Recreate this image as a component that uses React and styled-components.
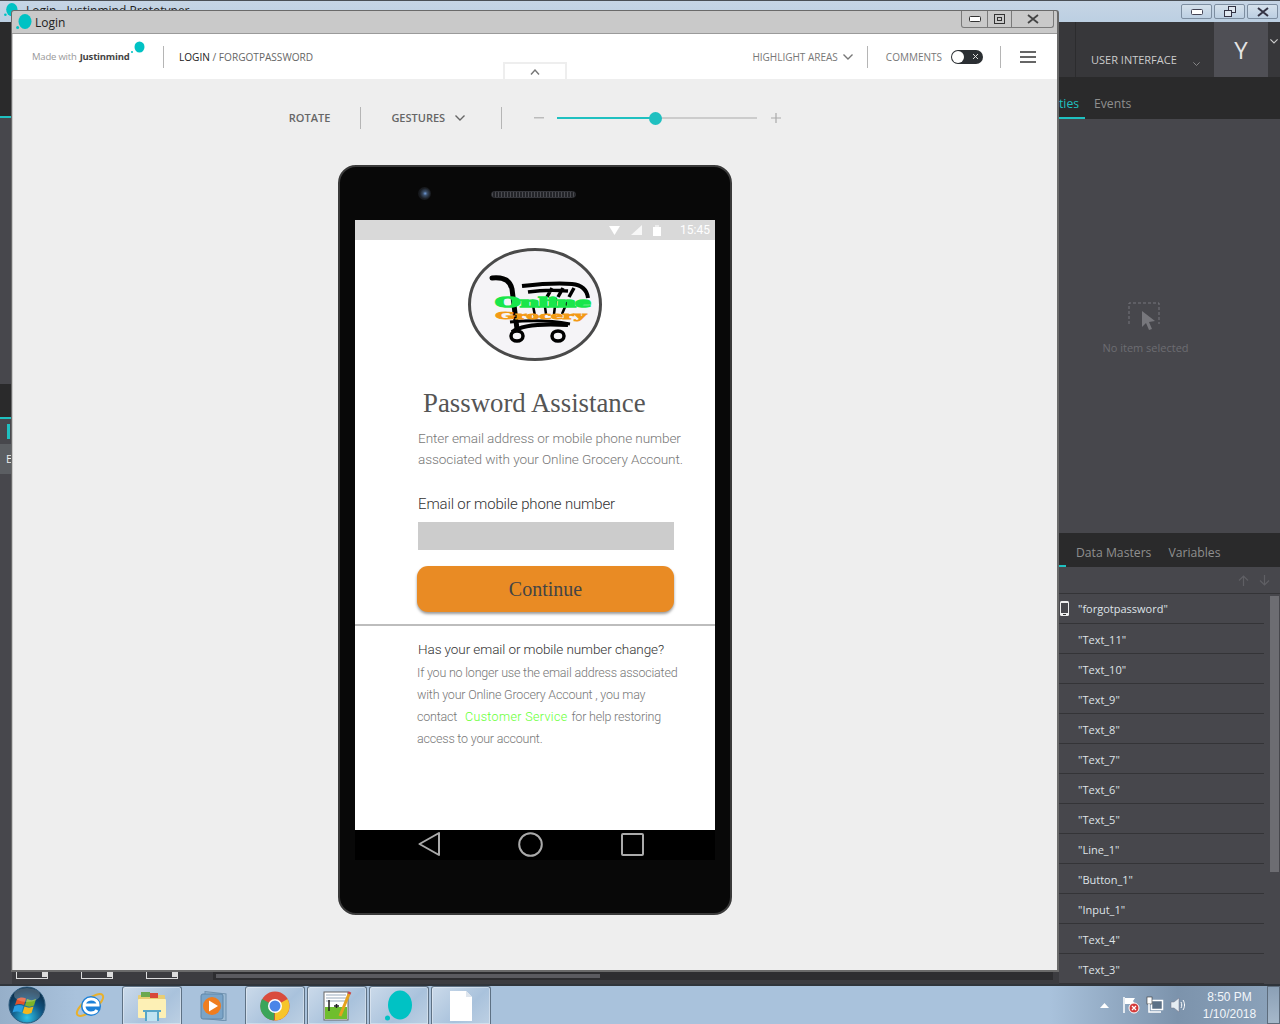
import styled, { createGlobalStyle } from 'styled-components';

const GlobalStyle = createGlobalStyle`
  html, body { margin: 0; padding: 0; background: #47474c; }
  * { box-sizing: border-box; }
`;

const Desktop = styled.div`
  position: relative;
  width: 1280px;
  height: 1024px;
  overflow: hidden;
  display: flex;
  flex-direction: column;
  font-family: 'Open Sans', 'Liberation Sans', sans-serif;
`;

/* ---------- app behind the preview window ---------- */

const AppTitleBar = styled.div`
  height: 22px;
  flex: none;
  border-top: 1px solid #4a4f55;
  background: linear-gradient(#c6d5e5, #bccfe2);
  display: flex;
  justify-content: space-between;
  padding-left: 4px;
`;

const AppTitle = styled.div`
  display: flex;
  align-items: center;
  gap: 8px;
  height: 18px;
  font-size: 12px;
  color: #222;
`;

const AppControls = styled.div`
  display: flex;
  gap: 2px;
  padding: 3px 2px 0 0;
`;

const AppControl = styled.div`
  width: 31px;
  height: 15px;
  border: 1px solid #7d8ea1;
  border-radius: 2px;
  background: linear-gradient(#d5e1ec, #bccfe2);
  display: flex;
  align-items: center;
  justify-content: center;
`;

const AppBody = styled.div`
  flex: 1;
  display: flex;
  min-height: 0;
`;

const LeftStrip = styled.div`
  width: 12px;
  flex: none;
  display: flex;
  flex-direction: column;
  background: #47474c;
`;

const StripBlock = styled.div`
  height: ${p => p.$h}px;
  flex: none;
  background: ${p => p.$bg || 'transparent'};
  border-bottom: ${p => (p.$teal ? '2px solid #1fc0c0' : 'none')};
  color: #eee;
  font-size: 11px;
  line-height: 30px;
  padding-left: 6px;
`;

const StripMark = styled.div`
  height: 15px;
  width: 3px;
  margin: 5px 0 5px 7px;
  background: #1fc0c0;
`;

const CenterColumn = styled.div`
  flex: 1;
  display: flex;
  flex-direction: column;
  justify-content: flex-end;
`;

const BottomStrip = styled.div`
  height: 12px;
  background: #3c3c40;
  display: flex;
  align-items: flex-start;
  padding-left: 4px;
  gap: 33px;
`;

const TinySelect = styled.div`
  width: 32px;
  height: 7px;
  border: 1px solid #ddd;
  border-top: none;
  position: relative;
  &::after {
    content: '';
    position: absolute;
    right: 0;
    top: -1px;
    width: 5px;
    height: 6px;
    background: #ddd;
  }
`;

const ScrollTrack = styled.div`
  margin-left: 2px;
  width: 840px;
  height: 8px;
  background: #2d2d30;
  padding: 2px 0 0 3px;
  &::after {
    content: '';
    display: block;
    width: 384px;
    height: 4px;
    background: #5b5b60;
  }
`;

const RightPanel = styled.div`
  width: 221px;
  flex: none;
  display: flex;
  flex-direction: column;
  background: #47474c;
`;

const PanelHeader = styled.div`
  height: 55px;
  flex: none;
  background: #37373a;
  display: flex;
  color: #ccc;
`;

const ModeLabel = styled.div`
  width: 139px;
  flex: none;
  display: flex;
  align-items: flex-end;
  gap: 16px;
  padding: 0 0 10px 15px;
  font-size: 11px;
  border-left: 1px solid #2c2c2e;
  margin-left: 16px;
  white-space: nowrap;
  svg { margin-bottom: 1px; }
`;

const Avatar = styled.div`
  width: 54px;
  flex: none;
  background: #4f4f55;
  color: #e4e4e4;
  font-size: 24px;
  display: flex;
  align-items: center;
  justify-content: center;
`;

const AvatarCaret = styled.div`
  flex: 1;
  padding: 5px 0 0 2px;
`;

const TabBar = styled.div`
  height: ${p => p.$h}px;
  flex: none;
  background: #2a2a2b;
  display: flex;
  align-items: center;
  gap: ${p => p.$gap}px;
  padding-left: ${p => p.$pad}px;
  padding-top: ${p => p.$top}px;
  font-size: 12.2px;
  color: #8f8f8f;
  position: relative;
`;

const ActiveLine = styled.div`
  position: absolute;
  left: 0;
  bottom: 0;
  height: 2px;
  width: ${p => p.$w}px;
  background: #1fc0c0;
`;

const TealTab = styled.span`
  color: #1fc0c0;
  width: 26px;
`;

const EmptyState = styled.div`
  height: 414px;
  flex: none;
  display: flex;
  flex-direction: column;
  align-items: center;
  padding: 183px 48px 0 0;
  gap: 8px;
  font-size: 11px;
  color: #6d6d72;
  svg { margin-right: 3px; }
`;

const SortBar = styled.div`
  height: 27px;
  flex: none;
  display: flex;
  justify-content: flex-end;
  align-items: center;
  gap: 10px;
  padding-right: 10px;
  border-bottom: 1px solid #343437;
`;

const ListArea = styled.div`
  flex: 1;
  display: flex;
  min-height: 0;
`;

const ItemList = styled.div`
  flex: 1;
  overflow: hidden;
`;

const ItemRow = styled.div`
  height: 30px;
  display: flex;
  align-items: center;
  position: relative;
  padding: ${p => (p.$first ? 0 : 2)}px 0 0 19px;
  font-size: 11px;
  color: #dfe3e8;
  border-bottom: 1px solid #343437;
  margin-right: 5px;
  white-space: nowrap;
`;

const RowIcon = styled.svg`
  position: absolute;
  left: 1px;
  top: 7px;
`;

const ListScrollbar = styled.div`
  width: 11px;
  flex: none;
  padding: 2px 1px 0 1px;
  &::after {
    content: '';
    display: block;
    height: 276px;
    background: #6d6d72;
  }
`;

/* ---------- preview window ---------- */

const PreviewWindow = styled.div`
  position: absolute;
  left: 11px;
  top: 10px;
  width: 1048px;
  height: 962px;
  border: 1px solid #6a6a6a;
  border-right-width: 2px;
  border-bottom-width: 2px;
  border-radius: 3px 3px 0 0;
  background: #c9c9c9;
  display: flex;
  flex-direction: column;
`;

const WindowTitle = styled.div`
  height: 23px;
  flex: none;
  display: flex;
  align-items: center;
  justify-content: space-between;
  padding-left: 4px;
  font-size: 12px;
  color: #222;
  border-bottom: 1px solid #9a9a9a;
`;

const TitleLeft = styled.div`
  display: flex;
  align-items: center;
  gap: 3px;
`;

const WindowControls = styled.div`
  display: flex;
  align-self: flex-start;
  height: 17px;
  margin-right: 3px;
  border: 1px solid #7a7a7a;
  border-top: none;
  border-radius: 0 0 3px 3px;
`;

const WindowButton = styled.div`
  width: ${p => p.$w}px;
  display: flex;
  align-items: center;
  justify-content: center;
  border-left: ${p => (p.$first ? 'none' : '1px solid #7a7a7a')};
`;

const WindowFrame = styled.div`
  flex: 1;
  display: flex;
  flex-direction: column;
  margin-left: 1px;
  min-height: 0;
  background: #eeeeee;
`;

const TopBar = styled.header`
  height: 45px;
  flex: none;
  background: #fff;
  display: flex;
  align-items: center;
  justify-content: space-between;
  padding: 0 21px 0 19px;
  position: relative;
`;

const BarGroup = styled.div`
  display: flex;
  align-items: center;
`;

const Brand = styled.div`
  display: flex;
  align-items: center;
  font-size: 9.5px;
  color: #999;
  width: 131px;
  position: relative;
  letter-spacing: -0.2px;
  b { color: #444; margin-left: 3px; font-weight: 700; }
`;

const BrandDot = styled.svg`
  position: absolute;
  left: 99px;
  top: -9px;
`;

const Rule = styled.div`
  width: 1px;
  height: ${p => p.$h || 22}px;
  background: #b5b5b5;
  margin: 0 ${p => p.$gap || 0}px;
`;

const Crumb = styled.div`
  font-size: 10.1px;
  color: #666;
  margin-left: 15px;
  b { color: #222; font-weight: 400; }
`;

const BarLabel = styled.span`
  font-size: 10px;
  color: #777;
  white-space: nowrap;
`;

const Spacer = styled.span`
  width: ${p => p.$w}px;
  flex: none;
`;

const Toggle = styled.div`
  width: 32px;
  height: 14px;
  border-radius: 7px;
  background: #2b2f33;
  margin-left: 9px;
  padding: 1px 3px 1px 1px;
  display: flex;
  align-items: center;
  justify-content: space-between;
  &::before {
    content: '';
    width: 12px;
    height: 12px;
    border-radius: 50%;
    background: #fff;
  }
`;

const Burger = styled.div`
  width: 16px;
  height: 12px;
  border-top: 2px solid #666;
  border-bottom: 2px solid #666;
  position: relative;
  &::after {
    content: '';
    position: absolute;
    left: 0;
    right: 0;
    top: 3px;
    height: 2px;
    background: #666;
  }
`;

const CollapseTab = styled.div`
  position: absolute;
  left: 490px;
  bottom: 0;
  width: 64px;
  height: 17px;
  border: 2px solid #eee;
  border-bottom: none;
  display: flex;
  align-items: center;
  justify-content: center;
`;

const Canvas = styled.main`
  flex: 1;
  display: flex;
  flex-direction: column;
  align-items: center;
  padding-top: 28px;
`;

const Controls = styled.div`
  display: flex;
  align-items: center;
  height: 22px;
`;

const ControlText = styled.span`
  font-size: 11px;
  line-height: 13px;
  margin-bottom: 2px;
  color: #666;
  font-weight: 600;
`;

const MinusMark = styled.svg`
  margin-left: -4px;
`;

const Slider = styled.div`
  width: 200px;
  height: 2px;
  background: #ccc;
  margin: 0 14px 0 13px;
  position: relative;
`;

const SliderFill = styled.div`
  height: 2px;
  background: #1fc0c0;
`;

const SliderKnob = styled.div`
  position: absolute;
  top: -5px;
  width: 13px;
  height: 13px;
  border-radius: 50%;
  background: #1fc0c0;
`;

/* ---------- phone ---------- */

const Phone = styled.div`
  margin-top: 36px;
  width: 394px;
  height: 750px;
  background: #080808;
  border: 2px solid #3a3a3a;
  border-radius: 18px;
  display: flex;
  flex-direction: column;
  align-items: center;
`;

const PhoneTop = styled.div`
  height: 53px;
  width: 100%;
  flex: none;
  position: relative;
  display: flex;
  align-items: center;
  justify-content: center;
  padding: 1px 3px 0 0;
`;

const Camera = styled.div`
  position: absolute;
  left: 78px;
  top: 20px;
  width: 13px;
  height: 13px;
  border-radius: 50%;
  background: radial-gradient(circle at 55% 50%, #6f9ad6 0, #3a4d66 22%, #1a1d22 55%, #0d0d0f 100%);
`;

const Speaker = styled.div`
  width: 85px;
  height: 7px;
  border-radius: 4px;
  border: 1px solid #34353a;
  background: repeating-linear-gradient(90deg, #4a4b50 0 1px, #222327 1px 3px);
`;

const Screen = styled.div`
  width: 360px;
  height: 640px;
  flex: none;
  display: flex;
  flex-direction: column;
  background: #fff;
`;

const StatusBar = styled.div`
  height: 20px;
  flex: none;
  background: #d9d9d9;
  display: flex;
  align-items: center;
  justify-content: flex-end;
  gap: 11px;
  padding-right: 5px;
  color: #fff;
  font-family: 'Roboto', sans-serif;
  font-size: 12px;
`;

const StatusTime = styled.span`
  margin-left: 8px;
`;

const Page = styled.div`
  flex: 1;
  display: flex;
  flex-direction: column;
  padding-top: 8px;
  font-family: 'Roboto', 'Liberation Sans', sans-serif;
  font-weight: 300;
`;

const LogoHolder = styled.div`
  display: flex;
  justify-content: center;
  height: 113px;
`;

const Heading = styled.h1`
  margin: 27px 0 0 68px;
  font-family: 'Liberation Serif', serif;
  font-size: 26.8px;
  line-height: 30px;
  font-weight: 400;
  color: #555;
`;

const Intro = styled.p`
  margin: 10px 0 0 63px;
  font-size: 13.6px;
  letter-spacing: -0.1px;
  line-height: 21px;
  color: #777;
  white-space: nowrap;
`;

const FieldLabel = styled.label`
  display: block;
  margin: 24px 0 0 63px;
  font-size: 15px;
  letter-spacing: -0.15px;
  line-height: 20px;
  color: #333;
`;

const Field = styled.div`
  width: 256px;
  height: 28px;
  margin: 8px 0 0 63px;
  background: #ccc;
`;

const ContinueButton = styled.div`
  width: 257px;
  height: 46px;
  margin: 16px 0 0 62px;
  border-radius: 11px;
  background: #e98b24;
  box-shadow: 0 2px 3px rgba(0, 0, 0, 0.4);
  display: flex;
  align-items: center;
  justify-content: center;
  font-family: 'Liberation Serif', serif;
  font-size: 20px;
  font-weight: 400;
  color: #444;
`;

const Separator = styled.div`
  height: 2px;
  margin-top: 12px;
  background: #bdbdbd;
`;

const HelpTitle = styled.div`
  margin: 14px 0 0 63px;
  font-size: 13.5px;
  letter-spacing: -0.08px;
  line-height: 18px;
  color: #333;
`;

const HelpText = styled.p`
  margin: 4px 0 0 62px;
  font-size: 12.5px;
  line-height: 22px;
  color: #777;
  white-space: nowrap;
  letter-spacing: -0.2px;
`;

const Link = styled.span`
  color: #66ff33;
  letter-spacing: 0.35px;
  margin: 0 1px 0 5px;
`;

const NavBar = styled.div`
  height: 30px;
  flex: none;
  background: #000;
  display: flex;
  align-items: center;
  padding: 0 0 2px 63px;
  gap: 78px;
`;

/* ---------- taskbar ---------- */

const Taskbar = styled.footer`
  height: 40px;
  flex: none;
  background: linear-gradient(90deg, #96afc9 0, #a9c2dc 6%, #a9c2dc 82%, #7c93ac 92%, #8ca3bb 100%);
  border-top: 2px solid #30353b;
  display: flex;
  align-items: stretch;
  padding-left: 8px;
`;

const StartOrb = styled.div`
  width: 38px;
  flex: none;
  display: flex;
  align-items: center;
  margin-right: 19px;
`;

const QuickIcon = styled.div`
  width: ${p => p.$w}px;
  margin-right: ${p => p.$after}px;
  flex: none;
  display: flex;
  align-items: center;
  justify-content: center;
`;

const TaskButton = styled.div`
  width: 60px;
  flex: none;
  margin-right: 2px;
  border: 1px solid #5e7184;
  border-bottom: none;
  border-radius: 3px 3px 0 0;
  background: linear-gradient(135deg, #cbdaea, #a9c2dc 60%, #bdd0e3);
  box-shadow: inset 0 0 0 1px rgba(255, 255, 255, 0.35);
  display: flex;
  align-items: center;
  justify-content: center;
`;

const Tray = styled.div`
  margin-left: auto;
  display: flex;
  align-items: center;
  color: #fff;
`;

const TrayIcons = styled.div`
  display: flex;
  align-items: center;
  gap: 6px;
  margin-right: 4px;
`;

const TrayArrow = styled.svg`
  margin-right: 7px;
`;

const Clock = styled.div`
  width: 76px;
  padding: 2px 0 0 1px;
  text-align: center;
  font-family: 'Liberation Sans', sans-serif;
  font-size: 12px;
  line-height: 17px;
  color: #f2f6fa;
`;

const ShowDesktop = styled.div`
  width: 13px;
  align-self: stretch;
  border: 1px solid #5d6c7c;
  background: linear-gradient(#8ba0b6, #a6b8ca);
`;

const Chevron = ({ size = 10, color = '#777', up = false, width = 1.4 }) => (
  <svg width={size} height={size * 0.6} viewBox="0 0 10 6" fill="none">
    <path d={up ? 'M1 5.5L5 1l4 4.5' : 'M.5.5L5 5 9.5.5'} stroke={color} strokeWidth={width} />
  </svg>
);

const JimDrop = ({ size = 16, small = false }) => (
  <svg width={size} height={size} viewBox="0 0 16 16">
    <ellipse cx="9" cy="7.5" rx="6.5" ry="7.5" fill="#00c2c4" />
    {small && <circle cx="1.6" cy="13.4" r="1.5" fill="#00c2c4" />}
  </svg>
);

const Logo = () => (
  <svg width="134" height="113" viewBox="0 0 134 113">
    <ellipse cx="67" cy="56.500" rx="65.500" ry="55" fill="#f5f4f7" stroke="#4a4a4a" strokeWidth="3" />
    <g fill="none" stroke="#000">
      <path d="M24 30c10-1 18 1 20 11l5 40" strokeWidth="5" strokeLinecap="round" />
      <path d="M42 74c20-2 44-1 60 2" strokeWidth="3" />
      <path d="M44 84c8-6 24-9 56-7" strokeWidth="4" />
      <ellipse cx="49" cy="88" rx="6" ry="5" strokeWidth="3.500" />
      <ellipse cx="90" cy="88" rx="6" ry="5" strokeWidth="3.500" />
      <path d="M54 38c18-2 38-3 50-2 10 1 15 6 16 14" strokeWidth="4" />
      <path d="M60 44c14-2 28-2 40-1M84 40l-5 9M95 40l-5 9M106 40l-5 9" strokeWidth="3.500" />
      <path d="M64 52l3 16M76 52l2 14M88 50l-2 16M100 52l-6 14" strokeWidth="2.500" />
    </g>
    <text x="27" y="59" fontFamily="'Liberation Serif', serif" fontWeight="700" fontSize="14" fill="#19e64b" stroke="#19e64b" strokeWidth="1.500" textLength="95" lengthAdjust="spacingAndGlyphs">Online</text>
    <text x="27" y="71" fontFamily="'Liberation Serif', serif" fontWeight="700" fontSize="11" fill="#f39a16" stroke="#f39a16" strokeWidth=".8" textLength="92" lengthAdjust="spacingAndGlyphs">Grocery</text>
  </svg>
);

const ROWS = ['Text_11', 'Text_10', 'Text_9', 'Text_8', 'Text_7', 'Text_6', 'Text_5', 'Line_1', 'Button_1', 'Input_1', 'Text_4', 'Text_3'];

const App = () => (
  <>
    <GlobalStyle />
    <Desktop>
      <AppTitleBar>
        <AppTitle>
          <JimDrop size={14} small />
          <span>Login - Justinmind Prototyper</span>
        </AppTitle>
        <AppControls>
          <AppControl>
            <svg width="12" height="6"><rect x=".5" y=".5" width="11" height="5" rx="1" fill="#fff" stroke="#445" /></svg>
          </AppControl>
          <AppControl>
            <svg width="12" height="11" fill="#dfe7ef" stroke="#334"><rect x="4.500" y=".5" width="7" height="6" /><rect x=".5" y="4.500" width="7" height="6" /></svg>
          </AppControl>
          <AppControl>
            <svg width="12" height="10" stroke="#334" strokeWidth="2"><path d="M1 1l10 8M11 1L1 9" /></svg>
          </AppControl>
        </AppControls>
      </AppTitleBar>

      <AppBody>
        <LeftStrip>
          <StripBlock $h={96} $bg="#2a2a2b" $teal />
          <StripBlock $h={266} />
          <StripBlock $h={35} $bg="#2a2a2b" $teal />
          <StripMark />
          <StripBlock $h={30} $bg="#5b5e62">E</StripBlock>
        </LeftStrip>

        <CenterColumn>
          <BottomStrip>
            <TinySelect />
            <TinySelect />
            <TinySelect />
            <ScrollTrack />
          </BottomStrip>
        </CenterColumn>

        <RightPanel>
          <PanelHeader>
            <ModeLabel>
              USER INTERFACE
              <Chevron size={7} color="#aaa" width={1} />
            </ModeLabel>
            <Avatar>Y</Avatar>
            <AvatarCaret><Chevron size={8} color="#ccc" /></AvatarCaret>
          </PanelHeader>
          <TabBar $h={42} $pad={0} $gap={9} $top={10}>
            <TealTab>ties</TealTab>
            <span>Events</span>
            <ActiveLine $w={26} />
          </TabBar>
          <EmptyState>
            <svg width="34" height="30" viewBox="0 0 34 30" fill="none">
              <path d="M2 22V1h30v21" stroke="#77777c" strokeDasharray="3 2" />
              <path d="M15 9l13 10-6 1 3 7-3 1-3-7-4 4z" fill="#77777c" />
            </svg>
            No item selected
          </EmptyState>
          <TabBar $h={34} $pad={17} $gap={17} $top={4}>
            <span>Data Masters</span>
            <span>Variables</span>
            <ActiveLine $w={7} />
          </TabBar>
          <SortBar>
            <svg width="11" height="11" viewBox="0 0 11 11" fill="none" stroke="#5f5f64" strokeWidth="1.200"><path d="M5.500 11V1M1 5.500L5.500 1 10 5.500" /></svg>
            <svg width="11" height="11" viewBox="0 0 11 11" fill="none" stroke="#5f5f64" strokeWidth="1.200"><path d="M5.500 0v10M1 5.500L5.500 10 10 5.500" /></svg>
          </SortBar>
          <ListArea>
            <ItemList>
              <ItemRow $first>
                <RowIcon width="9" height="15" viewBox="0 0 9 15">
                  <rect width="9" height="15" rx="1.500" fill="#eee" />
                  <rect x="1" y="2" width="7" height="10" fill="#47474c" />
                  <rect x="3" y="13" width="3" height="1" fill="#333" />
                </RowIcon>
                "forgotpassword"
              </ItemRow>
              {ROWS.map(name => (
                <ItemRow key={name}>"{name}"</ItemRow>
              ))}
            </ItemList>
            <ListScrollbar />
          </ListArea>
        </RightPanel>
      </AppBody>

      <Taskbar>
        <StartOrb>
          <svg width="38" height="38" viewBox="0 0 38 38">
            <defs>
              <radialGradient id="orb" cx="50%" cy="85%" r="75%">
                <stop offset="0" stopColor="#2fc4e8" />
                <stop offset=".6" stopColor="#10527f" />
                <stop offset="1" stopColor="#0c2f4b" />
              </radialGradient>
            </defs>
            <circle cx="19" cy="19" r="18" fill="url(#orb)" stroke="#2b5a7c" />
            <path d="M9 13c3-2 6-2 9-.5l-2 6.500c-3-1.500-6-1.500-9 0z" fill="#e2522c" />
            <path d="M19 13c3 1.500 6 1.500 9 0l-2 6.500c-3 1.500-6 1.500-9 0z" fill="#7eb42a" />
            <path d="M6.500 20c3-1.500 6-1.500 9 0l-2 6.500c-3-1.500-6-1.500-9 0z" fill="#2a9ee2" />
            <path d="M16.500 20.500c3 1.500 6 1.500 9 0l-2 6.500c-3 1.500-6 1.500-9 0z" fill="#f3b71e" />
            <ellipse cx="19" cy="9" rx="13" ry="7" fill="#fff" opacity=".22" />
          </svg>
        </StartOrb>
        <QuickIcon $w={50} $after={7}>
          <svg width="34" height="34" viewBox="0 0 34 34" fill="none">
            <ellipse cx="17" cy="17" rx="16" ry="6" transform="rotate(-38 17 17)" stroke="#e9b02b" strokeWidth="2" />
            <circle cx="18" cy="18" r="10" fill="#1c80d8" />
            <path d="M11 17h14c0-4-3-6-7-6s-7 3-7 7 3 7 7 7c3 0 5-1 6-3" stroke="#fff" strokeWidth="3" />
          </svg>
        </QuickIcon>
        <TaskButton>
          <svg width="32" height="32" viewBox="0 0 32 32">
            <rect x="2" y="5" width="27" height="22" rx="1" fill="#e8cd74" />
            <rect x="5" y="2" width="9" height="5" fill="#6aa84f" />
            <rect x="14" y="3" width="8" height="5" fill="#d8483a" />
            <rect x="2" y="9" width="28" height="19" rx="1" fill="#fdf0b5" />
            <path d="M10 31v-10h12v10M7 21h18" fill="#bfe3f2" stroke="#57a6c8" strokeWidth="2" />
          </svg>
        </TaskButton>
        <QuickIcon $w={61} $after={0}>
          <svg width="32" height="32" viewBox="0 0 32 32">
            <rect x="6" y="2" width="21" height="27" fill="#9dbbd4" stroke="#6f90ad" transform="skewY(6)" />
            <rect x="2" y="5" width="22" height="25" rx="2" fill="#7aa4c8" stroke="#5f86a8" />
            <circle cx="13" cy="17" r="9" fill="#ef7d1f" />
            <path d="M10 11.500l9 5.500-9 5.500z" fill="#fff" />
          </svg>
        </QuickIcon>
        <TaskButton>
          <svg width="30" height="30" viewBox="0 0 30 30">
            <circle cx="15" cy="15" r="14.500" fill="#d94c3d" />
            <path d="M15 15L27.600 8A14.500 14.500 0 0 1 15 29.500z" fill="#f6c52c" />
            <path d="M15 15l-1 14.500A14.500 14.500 0 0 1 2 8z" fill="#3ba55a" />
            <circle cx="15" cy="15" r="7" fill="#fff" />
            <circle cx="15" cy="15" r="5.500" fill="#4a85e8" />
          </svg>
        </TaskButton>
        <TaskButton>
          <svg width="30" height="32" viewBox="0 0 30 32">
            <rect x="2" y="2" width="24" height="28" fill="#fff" stroke="#666" />
            <rect x="3" y="17" width="22" height="12" fill="#6fbe2e" />
            <path d="M4 5h20M4 8h20M4 11h20" stroke="#9ab" />
            <path d="M7 10v11M12 16h5M14.500 14v4" stroke="#222" strokeWidth="1.500" />
            <path d="M27 4L18 26" stroke="#e6a21f" strokeWidth="3" />
            <path d="M27 4l1-2" stroke="#c44" strokeWidth="3" />
          </svg>
        </TaskButton>
        <TaskButton>
          <svg width="30" height="32" viewBox="0 0 30 32">
            <ellipse cx="16" cy="15" rx="12" ry="14.500" fill="#00c2c4" />
            <circle cx="3.500" cy="28" r="2.500" fill="#00c2c4" />
          </svg>
        </TaskButton>
        <TaskButton>
          <svg width="24" height="32" viewBox="0 0 24 32">
            <path d="M1 1h16l6 6v24H1z" fill="#fff" />
            <path d="M17 1l6 6h-6z" fill="#dfe6ee" />
          </svg>
        </TaskButton>
        <Tray>
          <TrayIcons>
            <TrayArrow width="9" height="5"><path d="M0 5l4.500-5L9 5z" fill="#fff" /></TrayArrow>
            <svg width="18" height="18" viewBox="0 0 18 18">
              <path d="M2 1v16" stroke="#fff" strokeWidth="1.500" />
              <path d="M3 2h10l-2 3 2 3H3z" fill="#fff" />
              <circle cx="12" cy="12" r="5" fill="#d43a3a" stroke="#fff" />
              <path d="M10 10l4 4M14 10l-4 4" stroke="#fff" strokeWidth="1.200" />
            </svg>
            <svg width="18" height="18" viewBox="0 0 18 18" fill="none" stroke="#fff">
              <rect x="5.500" y="4.500" width="11" height="9" fill="#5d7186" strokeWidth="1.500" />
              <rect x="1" y="1" width="5" height="7" fill="#fff" stroke="#333" strokeWidth=".6" />
              <path d="M3 8v8h12M8 16h6" strokeWidth="1.500" />
            </svg>
            <svg width="17" height="16" viewBox="0 0 17 16" fill="none">
              <path d="M1 5h3l5-4v14l-5-4H1z" fill="#e6edf3" stroke="#778" strokeWidth=".5" />
              <path d="M11 5c1 2 1 4 0 6M13 3c2 3 2 7 0 10" stroke="#fff" />
            </svg>
          </TrayIcons>
          <Clock>
            8:50 PM
            <br />
            1/10/2018
          </Clock>
          <ShowDesktop />
        </Tray>
      </Taskbar>

      <PreviewWindow>
        <WindowTitle>
          <TitleLeft>
            <JimDrop size={16} small />
            Login
          </TitleLeft>
          <WindowControls>
            <WindowButton $w={25} $first>
              <svg width="12" height="6"><rect x=".5" y=".5" width="11" height="5" rx="1" fill="#fff" stroke="#333" /></svg>
            </WindowButton>
            <WindowButton $w={24}>
              <svg width="11" height="10" fill="none" stroke="#333"><rect x=".5" y=".5" width="10" height="9" /><rect x="3.500" y="3.500" width="4" height="3" /></svg>
            </WindowButton>
            <WindowButton $w={42}>
              <svg width="12" height="10" stroke="#444" strokeWidth="1.800"><path d="M1 1l10 8M11 1L1 9" /></svg>
            </WindowButton>
          </WindowControls>
        </WindowTitle>

        <WindowFrame>
          <TopBar>
            <BarGroup>
              <Brand>
                Made with <b>Justinmind</b>
                <BrandDot width="14" height="14" viewBox="0 0 14 14">
                  <ellipse cx="8.500" cy="6" rx="5" ry="5.500" fill="#00c2c4" />
                  <circle cx="1" cy="11" r="1" fill="#00c2c4" />
                </BrandDot>
              </Brand>
              <Rule />
              <Crumb><b>LOGIN</b> / FORGOTPASSWORD</Crumb>
            </BarGroup>
            <CollapseTab><Chevron size={10} color="#777" up /></CollapseTab>
            <BarGroup>
              <BarLabel>HIGHLIGHT AREAS</BarLabel>
              <Spacer $w={5} />
              <Chevron size={10} color="#777" />
              <Rule $gap={14} />
              <Spacer $w={4} />
              <BarLabel>COMMENTS</BarLabel>
              <Toggle>
                <svg width="9" height="9" viewBox="0 0 9 9" stroke="#ddd"><path d="M2 2l5 5M7 2L2 7" /></svg>
              </Toggle>
              <Rule $gap={17} />
              <Spacer $w={2} />
              <Burger />
            </BarGroup>
          </TopBar>

          <Canvas>
            <Controls>
              <ControlText>ROTATE</ControlText>
              <Rule $gap={30} />
              <ControlText>GESTURES</ControlText>
              <Spacer $w={10} />
              <Chevron size={10} color="#666" />
              <Rule $gap={36} />
              <MinusMark width="10" height="2"><rect width="10" height="1.500" fill="#bbb" /></MinusMark>
              <Slider>
                <SliderFill style={{ width: '49%' }} />
                <SliderKnob style={{ left: '46%' }} />
              </Slider>
              <svg width="10" height="10" stroke="#aaa" strokeWidth="1.200"><path d="M5 0v10M0 5h10" /></svg>
            </Controls>

            <Phone>
              <PhoneTop>
                <Camera />
                <Speaker />
              </PhoneTop>
              <Screen>
                <StatusBar>
                  <svg width="11" height="9"><path d="M0 0h11L5.500 9z" fill="#fff" /></svg>
                  <svg width="11" height="10"><path d="M0 10L11 0v10z" fill="#fff" opacity=".8" /></svg>
                  <svg width="8" height="11"><rect y="2" width="8" height="9" fill="#fff" /><rect x="2" width="4" height="2" fill="#eee" /></svg>
                  <StatusTime>15:45</StatusTime>
                </StatusBar>
                <Page>
                  <LogoHolder><Logo /></LogoHolder>
                  <Heading>Password Assistance</Heading>
                  <Intro>
                    Enter email address or mobile phone number
                    <br />
                    associated with your Online Grocery Account.
                  </Intro>
                  <FieldLabel>Email or mobile phone number</FieldLabel>
                  <Field />
                  <ContinueButton>Continue</ContinueButton>
                  <Separator />
                  <HelpTitle>Has your email or mobile number change?</HelpTitle>
                  <HelpText>
                    If you no longer use the email address associated
                    <br />
                    with your Online Grocery Account , you may
                    <br />
                    contact <Link>Customer Service</Link> for help restoring
                    <br />
                    access to your account.
                  </HelpText>
                </Page>
                <NavBar>
                  <svg width="22" height="24" viewBox="0 0 22 24" fill="none" stroke="#aaa" strokeWidth="2"><path d="M21 1v22L1.500 12z" strokeLinejoin="round" /></svg>
                  <svg width="25" height="25" viewBox="0 0 25 25" fill="none" stroke="#aaa" strokeWidth="2"><circle cx="12.500" cy="12.500" r="11.300" /></svg>
                  <svg width="23" height="23" viewBox="0 0 23 23" fill="none" stroke="#aaa" strokeWidth="2"><rect x="1" y="1" width="21" height="21" rx="1" /></svg>
                </NavBar>
              </Screen>
            </Phone>
          </Canvas>
        </WindowFrame>
      </PreviewWindow>
    </Desktop>
  </>
);

export default App;
